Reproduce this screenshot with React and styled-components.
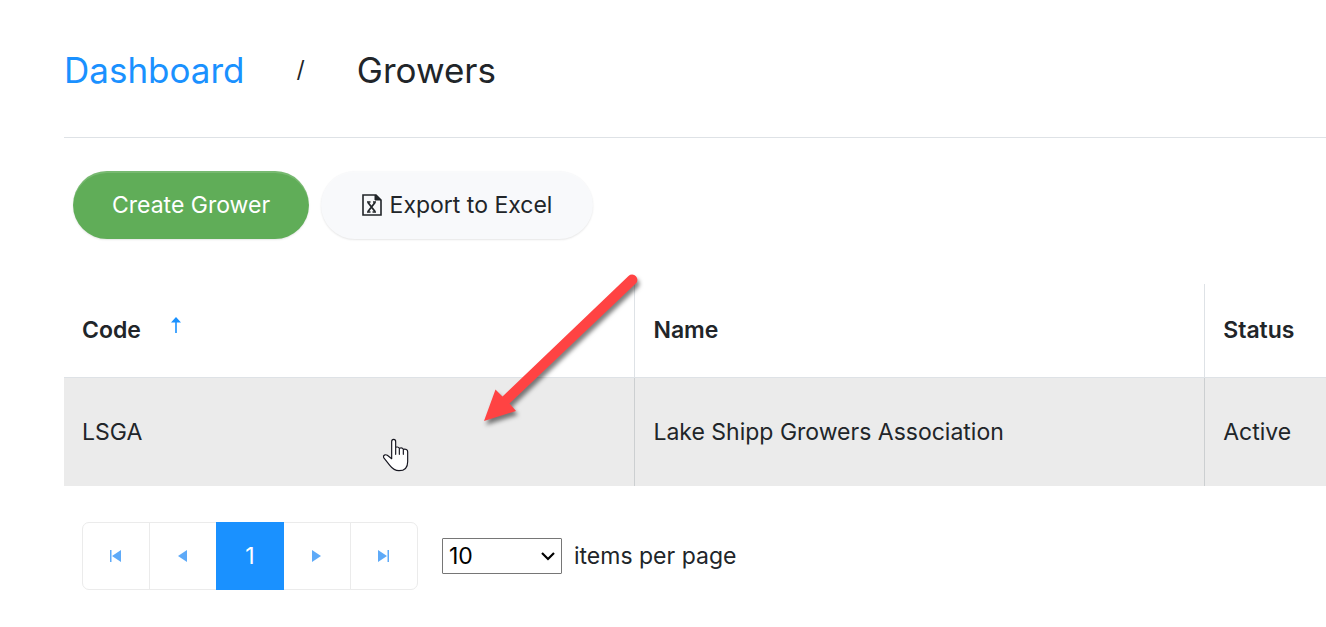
import { useState } from "react";
import styled, { createGlobalStyle } from "styled-components";

const columns = [
  { key: "code", title: "Code", width: "45.2%" },
  { key: "name", title: "Name", width: "45.15%" },
  { key: "status", title: "Status", width: "auto" },
];

const growers = [
  { code: "LSGA", name: "Lake Shipp Growers Association", status: "Active" },
];

const GlobalStyle = createGlobalStyle`
  *, *::before, *::after {
    box-sizing: border-box;
  }

  body {
    --color-primary: #1a91ff;
    --color-text: #212529;
    --color-border: #dee2e6;

    margin: 0;
    background-color: #fff;
    color: var(--color-text);
    font-family: Inter, "Open Sans", sans-serif;
    font-size: 23px;
    font-weight: 400;
    line-height: 36px;
    overflow-x: hidden;
  }

  button, select {
    font: inherit;
    color: inherit;
  }
`;

const Page = styled.main`
  padding-left: 64px;
`;

const Breadcrumb = styled.nav`
  display: flex;
  align-items: center;
  gap: 52px;
  height: 138px;
  padding-top: 2px;
  border-bottom: 1px solid var(--color-border);
  font-size: 35px;
`;

const Crumb = styled.span`
  color: var(--color-text);
`;

const CrumbLink = styled.a`
  color: var(--color-primary);
  text-decoration: none;
`;

const Separator = styled.span`
  font-size: 23px;
`;

const Toolbar = styled.div`
  display: flex;
  gap: 12px;
  padding: 33px 9px 45px;
`;

const PillButton = styled.button`
  display: flex;
  align-items: center;
  justify-content: center;
  gap: 8px;
  min-width: ${(p) => (p.$primary ? "236px" : "272px")};
  height: 68px;
  padding: 0 32px;
  border: none;
  border-radius: 34px;
  cursor: pointer;
  background-color: ${(p) => (p.$primary ? "#60ad58" : "#f8f9fb")};
  color: ${(p) => (p.$primary ? "#fff" : "var(--color-text)")};
  box-shadow:
    inset 0 2px 0 rgba(255, 255, 255, 0.15),
    0 1px 2px rgba(0, 0, 0, 0.1);
`;

const GridWrapper = styled.div`
  position: relative;
`;

const Table = styled.table`
  width: 100%;
  table-layout: fixed;
  border-collapse: separate;
  border-spacing: 0;
  text-align: left;
`;

const HeaderCell = styled.th`
  width: ${(p) => p.$width};
  height: 94px;
  padding: 0 18px 2px;
  border-bottom: 1px solid var(--color-border);
  font-weight: 600;

  & + & {
    border-left: 1px solid var(--color-border);
  }
`;

const HeaderContent = styled.div`
  display: flex;
  align-items: center;
  gap: 28px;
`;

const SortIcon = styled.svg`
  width: 14px;
  height: 18px;
  margin-bottom: 10px;
`;

const Row = styled.tr`
  background-color: #ebebeb;
  cursor: pointer;
`;

const Cell = styled.td`
  height: 108px;
  padding: 0 18px;

  & + & {
    border-left: 1px solid #cccfd1;
  }
`;

const ArrowMark = styled.svg`
  position: absolute;
  left: 410px;
  top: -14px;
  width: 170px;
  height: 170px;
  pointer-events: none;
  overflow: visible;
  filter: drop-shadow(2px 4px 2px rgba(0, 0, 0, 0.5));
`;

const HandPointer = styled.svg`
  position: absolute;
  left: 318px;
  top: 154px;
  width: 28px;
  height: 35px;
  pointer-events: none;
`;

const Pager = styled.div`
  display: flex;
  align-items: center;
  gap: 24px;
  padding: 36px 18px;
`;

const PageButtons = styled.div`
  display: flex;
`;

const PageButton = styled.button`
  display: flex;
  align-items: center;
  justify-content: center;
  width: 68px;
  height: 68px;
  padding: 0;
  border: 1px solid ${(p) => (p.$active ? "var(--color-primary)" : "#ebebeb")};
  background-color: ${(p) => (p.$active ? "var(--color-primary)" : "#fff")};
  color: ${(p) => (p.$active ? "#fff" : "#5eaaf8")};
  position: relative;
  z-index: ${(p) => (p.$active ? 1 : 0)};
  cursor: pointer;

  & + & {
    margin-left: -1px;
  }

  &:first-child {
    border-radius: 7px 0 0 7px;
  }

  &:last-child {
    border-radius: 0 7px 7px 0;
  }
`;

const PageSize = styled.label`
  display: flex;
  align-items: center;
  gap: 12px;
`;

const SelectWrapper = styled.span`
  position: relative;
  display: flex;
`;

const Select = styled.select`
  appearance: none;
  width: 120px;
  height: 36px;
  padding: 0 6px;
  border: 1px solid #767676;
  border-radius: 1px;
  background-color: #fff;
  color: #000;
  line-height: 32px;
`;

const Chevron = styled.svg`
  position: absolute;
  right: 6px;
  top: 13px;
  width: 16px;
  height: 11px;
  pointer-events: none;
`;

function ExcelIcon() {
  return (
    <svg width="20" height="22" viewBox="0 0 20 22" fill="none" aria-hidden="true">
      <path d="M1 1h13l5 5v15H1z" stroke="#212529" strokeWidth="1.6" />
      <path d="M13 1v5h6z" fill="#212529" stroke="#212529" />
      <path d="M6 8.500l7 9M13 8.500l-7 9" stroke="#212529" strokeWidth="1.8" />
      <path d="M5 8h3.500M11 8h3M5 18h3.500M10.500 18H14" stroke="#212529" strokeWidth="1.3" />
    </svg>
  );
}

const pagerShapes = {
  first: "M0 0h1.500v12H0zM11 0v12L2 6z",
  previous: "M10 0v12L1 6z",
  next: "M1 0l9 6-9 6z",
  last: "M0 0l9 6-9 6zM9.500 0H11v12H9.500z",
};

function PagerIcon({ name }) {
  return (
    <svg width="12" height="13" viewBox="0 0 12 13" aria-hidden="true">
      <path d={pagerShapes[name]} fill="currentColor" />
    </svg>
  );
}

function App() {
  const [pageSize, setPageSize] = useState("10");

  return (
    <>
      <GlobalStyle />
      <Page>
        <Breadcrumb aria-label="Breadcrumb">
          <CrumbLink href="#dashboard">Dashboard</CrumbLink>
          <Separator>/</Separator>
          <Crumb>Growers</Crumb>
        </Breadcrumb>

        <Toolbar>
          <PillButton type="button" $primary>
            Create Grower
          </PillButton>
          <PillButton type="button">
            <ExcelIcon />
            Export to Excel
          </PillButton>
        </Toolbar>

        <GridWrapper>
          <Table>
            <thead>
              <tr>
                {columns.map((column) => (
                  <HeaderCell key={column.key} $width={column.width} scope="col">
                    <HeaderContent>
                      {column.title}
                      {column.key === "code" && (
                        <SortIcon viewBox="0 0 14 18" aria-hidden="true">
                          <path
                            d="M7 1l5 5.500H7.800V17H6.200V6.500H2z"
                            fill="#1a91ff"
                          />
                        </SortIcon>
                      )}
                    </HeaderContent>
                  </HeaderCell>
                ))}
              </tr>
            </thead>
            <tbody>
              {growers.map((grower) => (
                <Row key={grower.code}>
                  {columns.map((column) => (
                    <Cell key={column.key}>{grower[column.key]}</Cell>
                  ))}
                </Row>
              ))}
            </tbody>
          </Table>

          <ArrowMark viewBox="474 270 170 170" aria-hidden="true">
            <path
              d="M484 421l11.500-31.500 7 7L628.500 276a5.200 5.200 0 0 1 7.300 7.600L509.500 403.500l6.500 7.500z"
              fill="#ff4343"
            />
          </ArrowMark>
          <HandPointer viewBox="36 519 84 105" aria-hidden="true">
            <path
              d="M65 581V530c0-9 12-9 12 0v17c5-2 9-1 11 3 5-2 10-1 12 3 7-2 13 1 13 7v30c0 17-10 27-26 27-12 0-20-6-27-15L41 578c-3-7 5-11 11-7zM77 547v21M88 550v18M100 553v15"
              fill="#fff"
              stroke="#15151f"
              strokeWidth="3.5"
              strokeLinejoin="round"
              strokeLinecap="round"
            />
          </HandPointer>
        </GridWrapper>

        <Pager>
          <PageButtons>
            <PageButton type="button" aria-label="First page">
              <PagerIcon name="first" />
            </PageButton>
            <PageButton type="button" aria-label="Previous page">
              <PagerIcon name="previous" />
            </PageButton>
            <PageButton type="button" $active aria-current="page">
              1
            </PageButton>
            <PageButton type="button" aria-label="Next page">
              <PagerIcon name="next" />
            </PageButton>
            <PageButton type="button" aria-label="Last page">
              <PagerIcon name="last" />
            </PageButton>
          </PageButtons>
          <PageSize>
            <SelectWrapper>
              <Select
                value={pageSize}
                onChange={(e) => setPageSize(e.target.value)}
              >
                <option value="10">10</option>
                <option value="20">20</option>
                <option value="50">50</option>
              </Select>
              <Chevron viewBox="0 0 16 11" aria-hidden="true">
                <path
                  d="M2 2l6 6 6-6"
                  fill="none"
                  stroke="#000"
                  strokeWidth="2.2"
                />
              </Chevron>
            </SelectWrapper>
            items per page
          </PageSize>
        </Pager>
      </Page>
    </>
  );
}

export default App;
